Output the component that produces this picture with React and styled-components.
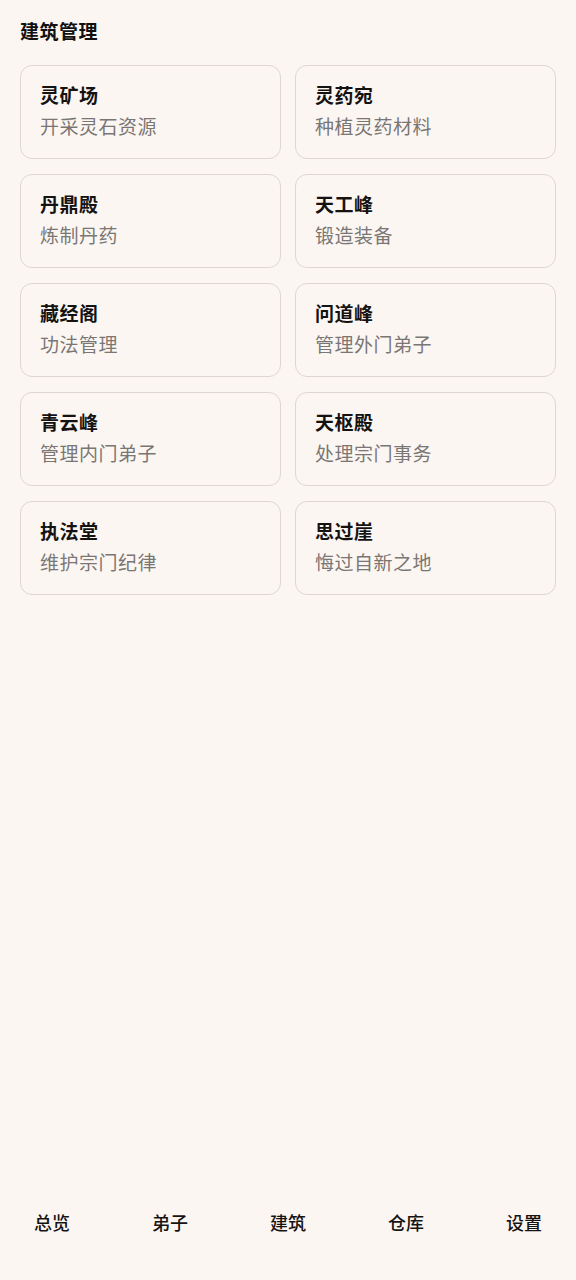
import React from 'react'
import styled, { createGlobalStyle } from 'styled-components'

const GlobalStyle = createGlobalStyle`
  html, body {
    margin: 0;
    padding: 0;
    background: #fcf6f3;
  }
  body {
    font-family: "Noto Sans CJK SC", "Noto Sans", sans-serif;
    color: #111;
  }
`

const buildings = [
  { name: '灵矿场', desc: '开采灵石资源' },
  { name: '灵药宛', desc: '种植灵药材料' },
  { name: '丹鼎殿', desc: '炼制丹药' },
  { name: '天工峰', desc: '锻造装备' },
  { name: '藏经阁', desc: '功法管理' },
  { name: '问道峰', desc: '管理外门弟子' },
  { name: '青云峰', desc: '管理内门弟子' },
  { name: '天枢殿', desc: '处理宗门事务' },
  { name: '执法堂', desc: '维护宗门纪律' },
  { name: '思过崖', desc: '悔过自新之地' },
]

const tabs = ['总览', '弟子', '建筑', '仓库', '设置']

const Page = styled.div`
  display: flex;
  flex-direction: column;
  height: 1280px;
  box-sizing: border-box;
`

const Content = styled.main`
  flex: 1;
  padding: 17px 20px 0 20px;
`

const Header = styled.h1`
  margin: 0 0 20px 0;
  font-size: 19px;
  font-weight: 700;
  line-height: 28px;
  letter-spacing: 0.5px;
`

const Grid = styled.div`
  display: grid;
  grid-template-columns: 1fr 1fr;
  column-gap: 14px;
  row-gap: 15px;
`

const Card = styled.div`
  height: 94px;
  box-sizing: border-box;
  padding: 15px 19px 0 19px;
  border: 1.5px solid #ddd6d1;
  border-radius: 12px;
  background: #fcf6f3;
`

const CardTitle = styled.div`
  font-size: 19px;
  font-weight: 700;
  line-height: 28px;
  letter-spacing: 0.5px;
  color: #151312;
`

const CardDesc = styled.div`
  margin-top: 3px;
  font-size: 19px;
  line-height: 28px;
  letter-spacing: 0.5px;
  color: #7a7674;
`

const Nav = styled.nav`
  display: flex;
  justify-content: space-between;
  align-items: center;
  padding: 0 34px 20px 34px;
  height: 96px;
  box-sizing: border-box;
`

const Tab = styled.div`
  font-size: 18px;
  line-height: 28px;
  font-weight: 500;
  color: #161412;
`

export default function App() {
  return (
    <Page>
      <GlobalStyle />
      <Content>
        <Header>建筑管理</Header>
        <Grid>
          {buildings.map(b => (
            <Card key={b.name}>
              <CardTitle>{b.name}</CardTitle>
              <CardDesc>{b.desc}</CardDesc>
            </Card>
          ))}
        </Grid>
      </Content>
      <Nav>
        {tabs.map(t => (
          <Tab key={t}>{t}</Tab>
        ))}
      </Nav>
    </Page>
  )
}
